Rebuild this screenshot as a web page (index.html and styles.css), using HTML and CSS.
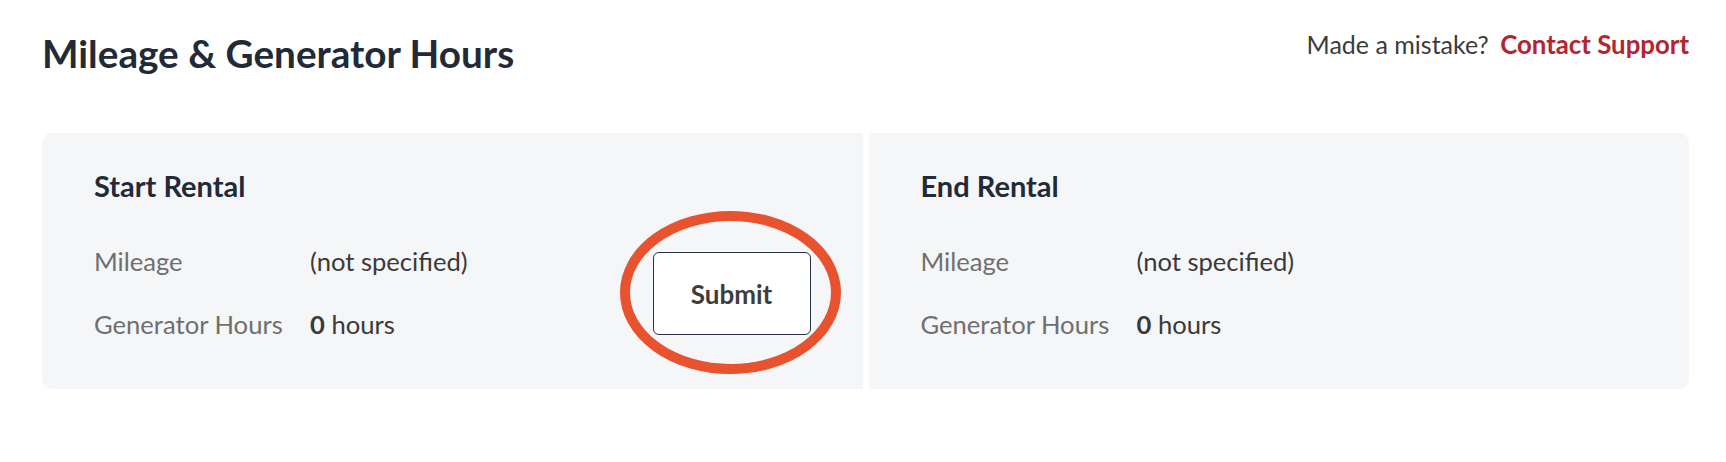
FILE: index.html
```html
<html lang="en"><head>
    <meta charset="UTF-8">
    <meta name="viewport" content="width=device-width, initial-scale=1.0">
    <title>Mileage &amp; Generator Hours</title>
    <link rel="stylesheet" href="styles.css">
  </head>
  <body>
    <!-- Page Header -->
    <div class="page-header">
      <h1>Mileage &amp; Generator Hours</h1>
      <p class="support-note">Made a mistake? <a href="#" class="support-link">Contact Support</a></p>
    </div>

    <!-- Readings Card -->
    <div class="readings">
      <!-- Start Rental -->
      <div class="readings-panel panel-start">
        <h3>Start Rental</h3>
        <div class="panel-body">
          <div class="reading-list">
            <div class="reading-row">
              <span class="reading-label">Mileage</span>
              <span class="reading-value">(not specified)</span>
            </div>
            <div class="reading-row">
              <span class="reading-label">Generator Hours</span>
              <span class="reading-value"><strong>0</strong> hours</span>
            </div>
          </div>
          <div class="submit-wrap">
            <button type="button" class="submit-button">Submit</button>
            <!-- Highlight ring -->
            <svg class="highlight-ring" width="221" height="163" viewBox="0 0 221 163">
              <ellipse cx="110.5" cy="81.5" rx="105.5" ry="76.5" fill="none" stroke="#e9522e" stroke-width="10"></ellipse>
            </svg>
          </div>
        </div>
      </div>

      <!-- End Rental -->
      <div class="readings-panel panel-end">
        <h3>End Rental</h3>
        <div class="panel-body">
          <div class="reading-list">
            <div class="reading-row">
              <span class="reading-label">Mileage</span>
              <span class="reading-value">(not specified)</span>
            </div>
            <div class="reading-row">
              <span class="reading-label">Generator Hours</span>
              <span class="reading-value"><strong>0</strong> hours</span>
            </div>
          </div>
        </div>
      </div>
    </div>
  </body></html>
```

FILE: styles.css
```css
/* General Styling */
body {
  font-family: Lato, "Open Sans", sans-serif;
  margin: 0;
  padding: 0 37px 0 42px;
  background-color: #ffffff;
  color: #333;
}

/* Header */
.page-header {
  display: flex;
  justify-content: space-between;
  align-items: flex-start;
}

.page-header h1 {
  margin: 30px 0 0;
  font-size: 38.7px;
  font-weight: bold;
  color: #212a36;
}

.support-note {
  margin: 29px 0 0;
  font-size: 25px;
  color: #3b3b3b;
}

.support-link {
  margin-left: 5px;
  font-size: 25.8px;
  color: #b3252f;
  font-weight: bold;
  text-decoration: none;
}

/* Readings Card */
.readings {
  display: grid;
  grid-template-columns: 1fr 1fr;
  gap: 6px;
  margin-top: 57px;
}

.readings-panel {
  background-color: #f5f6f8;
  padding: 35px 52px 50px;
}

.panel-start {
  border-radius: 10px 0 0 10px;
}

.panel-end {
  border-radius: 0 10px 10px 0;
}

.readings-panel h3 {
  margin: 0 0 43px;
  font-size: 29px;
  font-weight: bold;
  color: #212a36;
}

.panel-body {
  display: flex;
  justify-content: space-between;
  align-items: center;
}

/* Rows */
.reading-list {
  display: flex;
  flex-direction: column;
  gap: 33px;
}

.reading-row {
  display: flex;
  font-size: 25.6px;
  line-height: 30px;
}

.reading-label {
  width: 216px;
  color: #6f6f6f;
}

.reading-value {
  color: #3a3a3a;
}

/* Submit Button */
.submit-wrap {
  position: relative;
  top: 1px;
}

.submit-button {
  display: block;
  width: 158px;
  height: 83px;
  font-family: inherit;
  font-size: 26px;
  font-weight: bold;
  color: #3d3d3d;
  background-color: #ffffff;
  border: 1px solid #2b3340;
  border-radius: 6px;
  cursor: pointer;
}

.highlight-ring {
  position: absolute;
  left: -33px;
  top: -41px;
  pointer-events: none;
}
```
